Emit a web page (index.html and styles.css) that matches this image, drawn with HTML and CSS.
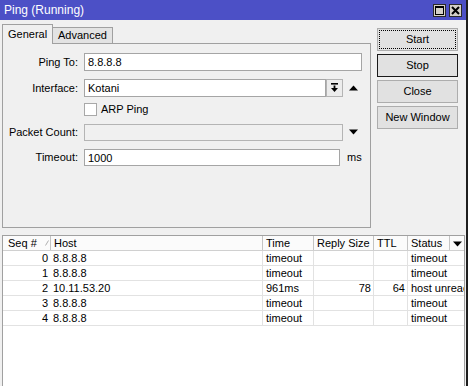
FILE: index.html
```html
<!DOCTYPE html>
<html>
<head>
<meta charset="utf-8">
<title>Ping (Running)</title>
<link rel="stylesheet" href="styles.css">
</head>
<body>
<div class="window">
  <div class="titlebar">
    <span class="title">Ping (Running)</span>
    <div class="tb-buttons">
      <span class="tb-btn"><svg width="9" height="9" viewBox="0 0 9 9"><rect x="0.5" y="0.5" width="8" height="8" fill="none" stroke="#000" stroke-width="1"/><rect x="0" y="0" width="9" height="2" fill="#000"/></svg></span>
      <span class="tb-btn"><svg width="9" height="9" viewBox="0 0 9 9"><path d="M1 1 L8 8 M8 1 L1 8" stroke="#000" stroke-width="2" fill="none"/></svg></span>
    </div>
  </div>
  <div class="top">
    <div class="left">
      <div class="tabs">
        <div class="tab tab-general">General</div>
        <div class="tab tab-adv">Advanced</div>
        <div class="tab-fill"></div>
      </div>
      <div class="panel">
        <div class="row r1">
          <span class="label">Ping To:</span>
          <div class="field w-ping">8.8.8.8</div>
        </div>
        <div class="row r2">
          <span class="label">Interface:</span>
          <div class="field w-iface">Kotani</div>
          <span class="dropbtn"><svg width="9" height="10" viewBox="0 0 9 10"><rect x="1" y="0" width="7" height="1.6" fill="#000"/><rect x="3.6" y="2.5" width="1.8" height="3" fill="#000"/><path d="M1 5 L8 5 L4.5 9 Z" fill="#000"/></svg></span>
          <span class="tri"><svg width="9" height="6" viewBox="0 0 9 6"><path d="M0 5.5 L9 5.5 L4.5 0.5 Z" fill="#000"/></svg></span>
        </div>
        <div class="row r3">
          <span class="label"></span>
          <span class="checkbox"></span>
          <span class="check-label">ARP Ping</span>
        </div>
        <div class="row r4">
          <span class="label">Packet Count:</span>
          <div class="field field-disabled w-count"></div>
          <span class="tri tri-down"><svg width="9" height="6" viewBox="0 0 9 6"><path d="M0 0.5 L9 0.5 L4.5 5.5 Z" fill="#000"/></svg></span>
        </div>
        <div class="row r5">
          <span class="label">Timeout:</span>
          <div class="field w-timeout">1000</div>
          <span class="unit">ms</span>
        </div>
      </div>
    </div>
    <div class="buttons">
      <div class="btn btn-focus">Start</div>
      <div class="btn btn-default">Stop</div>
      <div class="btn">Close</div>
      <div class="btn">New Window</div>
    </div>
  </div>
  <div class="table">
    <div class="thead">
      <div class="th th-seq">Seq #<svg class="sort" width="4" height="6" viewBox="0 0 4 6"><path d="M0.5 5.5 L3.5 0.5" stroke="#b0b0b0" stroke-width="1" fill="none"/></svg></div>
      <div class="th">Host</div>
      <div class="th">Time</div>
      <div class="th">Reply Size</div>
      <div class="th">TTL</div>
      <div class="th">Status</div>
      <div class="th th-menu"><svg width="9" height="6" viewBox="0 0 9 6"><path d="M0 0.5 L9 0.5 L4.5 5.5 Z" fill="#000"/></svg></div>
    </div>
    <div class="tr">
      <div class="td td-seq">0</div><div class="td td-host">8.8.8.8</div><div class="td">timeout</div><div class="td num"></div><div class="td num"></div><div class="td td-status">timeout</div>
    </div>
    <div class="tr">
      <div class="td td-seq">1</div><div class="td td-host">8.8.8.8</div><div class="td">timeout</div><div class="td num"></div><div class="td num"></div><div class="td td-status">timeout</div>
    </div>
    <div class="tr">
      <div class="td td-seq">2</div><div class="td td-host">10.11.53.20</div><div class="td">961ms</div><div class="td num">78</div><div class="td num">64</div><div class="td td-status">host unreachable</div>
    </div>
    <div class="tr">
      <div class="td td-seq">3</div><div class="td td-host">8.8.8.8</div><div class="td">timeout</div><div class="td num"></div><div class="td num"></div><div class="td td-status">timeout</div>
    </div>
    <div class="tr">
      <div class="td td-seq">4</div><div class="td td-host">8.8.8.8</div><div class="td">timeout</div><div class="td num"></div><div class="td num"></div><div class="td td-status">timeout</div>
    </div>
  </div>
</div>
</body>
</html>
```

FILE: styles.css
```css
* { box-sizing: border-box; }
html, body { margin: 0; padding: 0; }
body {
  background: #ffffff;
  font-family: "Liberation Sans", Arial, sans-serif;
  font-size: 11px;
  color: #000;
  width: 470px;
  height: 386px;
  overflow: hidden;
}
.window {
  width: 468px;
  height: 386px;
  background: #f0f0f0;
  border-right: 2px solid #1e1e1e;
  overflow: hidden;
}
.titlebar {
  height: 20px;
  background: #4c50c6;
  display: flex;
  align-items: center;
  justify-content: space-between;
  padding: 0 4px 0 4px;
  color: #fff;
  font-size: 12px;
}
.tb-buttons { display: flex; gap: 3px; }
.tb-btn {
  width: 13px;
  height: 13px;
  background: #d4d0c8;
  border: 1px solid #2a2a2a;
  display: flex;
  align-items: center;
  justify-content: center;
}
.top { display: flex; height: 208px; }
.left {
  margin-left: 2px;
  width: 369px;
  padding-top: 4px;
  display: flex;
  flex-direction: column;
}
.tabs { display: flex; align-items: flex-end; height: 20px; }
.tab { white-space: nowrap; }
.tab-general {
  width: 51px;
  height: 20px;
  background: #f0f0f0;
  border: 1px solid #a0a0a0;
  border-bottom: none;
  padding-left: 5px;
  line-height: 18px;
}
.tab-adv {
  width: 60px;
  height: 17px;
  background: #e3e3e3;
  border: 1px solid #a0a0a0;
  border-left: none;
  padding-left: 5px;
  line-height: 15px;
}
.tab-fill { flex: 1; height: 1px; border-bottom: 1px solid #a0a0a0; }
.panel {
  height: 184px;
  border: 1px solid #a0a0a0;
  border-top: none;
  padding-top: 9px;
}
.row { display: flex; align-items: center; height: 18px; }
.r2 { margin-top: 8px; }
.r3 { margin-top: 5px; height: 14px; }
.r4 { margin-top: 7px; }
.r5 { margin-top: 7px; }
.label {
  width: 75px;
  margin-right: 6px;
  text-align: right;
  white-space: nowrap;
}
.field {
  height: 18px;
  background: #fff;
  border: 1px solid #a5a5a5;
  padding-left: 3px;
  line-height: 16px;
}
.field-disabled { background: #f0f0f0; border-color: #b4b4b4; }
.w-ping { width: 278px; }
.w-iface { width: 242px; }
.w-count { width: 259px; height: 17px; }
.w-timeout { width: 256px; height: 17px; }
.dropbtn {
  width: 17px;
  height: 18px;
  margin-left: 0;
  border: 1px solid #b4b4b4;
  background: #ececec;
  display: flex;
  align-items: center;
  justify-content: center;
}
.tri { margin-left: 6px; display: flex; }
.tri-down { margin-left: 6px; }
.checkbox {
  width: 13px;
  height: 13px;
  background: #fff;
  border: 1px solid #a8a8a8;
}
.check-label { margin-left: 4px; }
.unit { margin-left: 7px; }
.buttons {
  margin-left: 6px;
  width: 81px;
  padding-top: 8px;
  display: flex;
  flex-direction: column;
  gap: 3px;
}
.btn {
  height: 23px;
  background: #e1e1e1;
  border: 1px solid #adadad;
  text-align: center;
  line-height: 21px;
  white-space: nowrap;
}
.btn-focus { outline: 1px dotted #000; outline-offset: -3px; }
.btn-default { border-color: #1a1a1a; }
.table {
  margin: 7px 0 0 2px;
  width: 463px;
  height: 160px;
  background: #fff;
  border: 1px solid #a0a0a0;
  border-bottom: none;
}
.thead, .tr {
  display: grid;
  grid-template-columns: 48px 212px 51px 60px 34px 42px 14px;
  height: 15px;
}
.thead { border-bottom: 1px solid #d0d0d0; background: #fbfbfb; }
.th {
  border-right: 1px solid #c4c4c4;
  padding-left: 3px;
  line-height: 14px;
  white-space: nowrap;
}
.th-seq { padding-left: 5px; display: flex; align-items: center; }
.sort { margin-left: 8px; }
.th-menu { border-right: none; display: flex; align-items: center; justify-content: center; padding-left: 0; padding-top: 1px; }
.tr { border-bottom: 1px solid #e2e2e2; }
.td {
  border-right: 1px solid #e2e2e2;
  padding-left: 3px;
  line-height: 14px;
  white-space: nowrap;
  overflow: hidden;
}
.td-seq { text-align: right; padding-right: 3px; border-right: none; }
.td-host { padding-left: 2px; }
.num { text-align: right; padding-right: 2px; }
.td-status { grid-column: span 2; border-right: none; }
```
